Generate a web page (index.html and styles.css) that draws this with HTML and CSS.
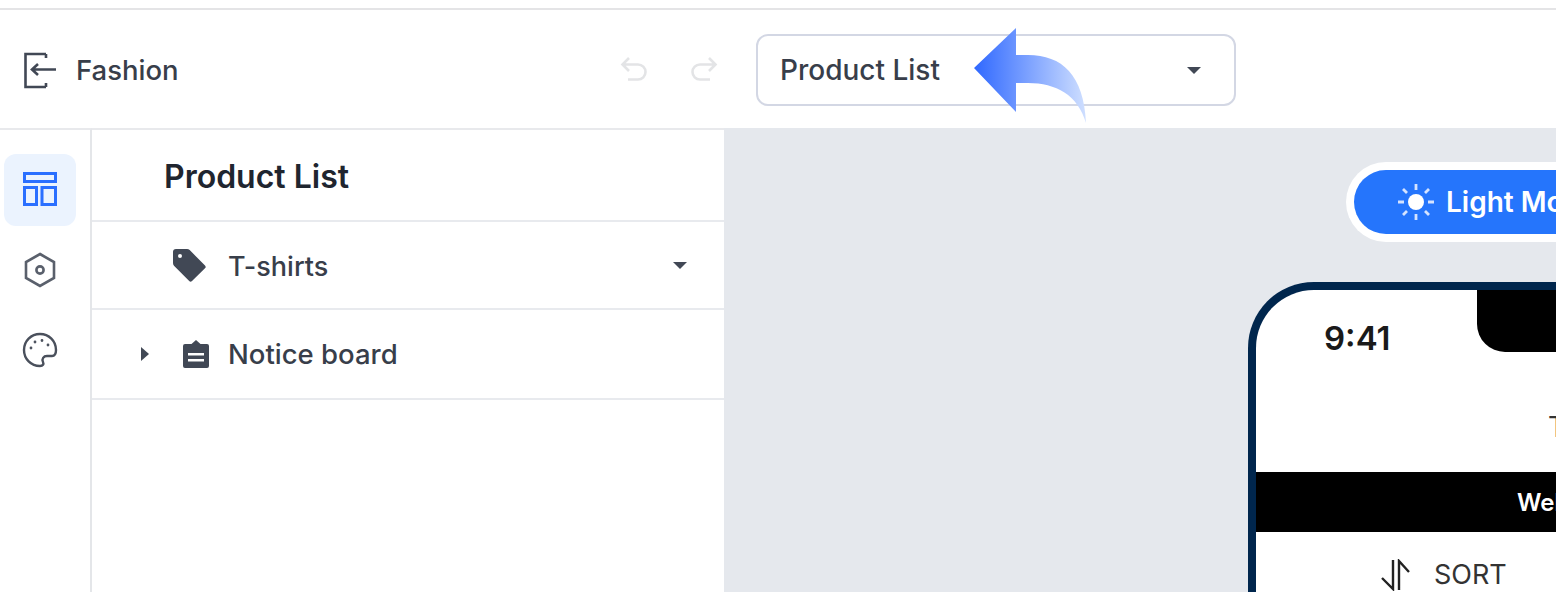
FILE: index.html
```html
<!DOCTYPE html>
<html lang="en">
<head>
<meta charset="utf-8">
<title>Fashion - Product List</title>
<link rel="stylesheet" href="styles.css">
</head>
<body>
<div class="topgap"></div>
<header class="header">
  <div class="brand">
    <svg class="i-exit" viewBox="0 0 34 38" fill="none" stroke="#414855" stroke-width="2.6"><path d="M23 3H2.500v33H23M23 3v4M23 36v-4"/><path d="M33 18.500H9M15 13l-6 5.500 6 5.500" /></svg>
    <span class="brand-name">Fashion</span>
  </div>
  <div class="history">
    <svg class="i-hist" viewBox="0 0 28 28" fill="none" stroke="#e3e4e6" stroke-width="2.6"><path d="M9 2 2.500 8.500 9 15M3 8.500h15a7.500 7.500 0 0 1 0 15H8"/></svg>
    <svg class="i-hist" viewBox="0 0 28 28" fill="none" stroke="#e3e4e6" stroke-width="2.6"><path d="M19 2l6.500 6.500L19 15M25 8.500H10a7.500 7.500 0 0 0 0 15h10"/></svg>
  </div>
  <div class="select">
    <span>Product List</span>
    <span class="caret"></span>
  </div>
  <svg class="arrow" viewBox="0 0 114 100" fill="url(#arrowfill)">
    <defs><linearGradient id="arrowfill" x1="0" x2="1" y1="0" y2="0"><stop offset="0" stop-color="#2f68ff"/><stop offset="1" stop-color="#cfdfff"/></linearGradient></defs>
    <path d="M0 40 42 0v27h12c34 0 56 20 58 68-8-28-30-40-58-40H42v29z"/>
  </svg>
</header>
<div class="main">
  <nav class="rail">
    <div class="rail-item active">
      <svg class="i-layout" viewBox="0 0 34 34" fill="none" stroke="#2a6fff" stroke-width="3"><path d="M1.500 1.500h31v8h-31zM1.500 15.500h12v17h-12zM19 15.500h13.500v17H19z"/></svg>
    </div>
    <div class="rail-item">
      <svg class="i-rail" viewBox="0 0 36 36" fill="none" stroke="#5a606c" stroke-width="2.600"><path d="M18 2 32 10v16l-14 8-14-8V10z"/><circle cx="18" cy="18" r="3.600"/></svg>
    </div>
    <div class="rail-item">
      <svg class="i-rail" viewBox="0 0 36 36" fill="none" stroke="#4a505c" stroke-width="2.400"><path d="M18 2C9 2 2 9 2 18s7 16 16 16c3 0 4-2 3-4-1.500-3 .5-6 4-6h5c3 0 4-3 4-6C34 9 27 2 18 2z"/><circle cx="9" cy="16" r=".8" fill="#414855" stroke-width="1.200"/><circle cx="13" cy="10" r=".8" fill="#414855" stroke-width="1.200"/><circle cx="20" cy="8.500" r=".8" fill="#414855" stroke-width="1.200"/><circle cx="26" cy="13" r=".8" fill="#414855" stroke-width="1.200"/></svg>
    </div>
  </nav>
  <aside class="panel">
    <div class="panel-title">Product List</div>
    <div class="row row-tshirts">
      <svg class="i-tag" viewBox="0 0 34 34" fill="#414855"><path d="M4 1h11c1 0 2 .4 2.700 1.100L33 17.500a2 2 0 0 1 0 2.800L20 33a2 2 0 0 1-2.800 0L2 17.700C1.300 17 1 16 1 15V4a3 3 0 0 1 3-3zm4 5a2 2 0 1 0 0 4 2 2 0 0 0 0-4z" fill-rule="evenodd"/></svg>
      <span class="row-label">T-shirts</span>
      <span class="caret caret-row"></span>
    </div>
    <div class="row row-notice">
      <span class="caret-right"></span>
      <svg class="i-board" viewBox="0 0 28 28" fill="#414855"><path d="M3 4h6.500L14 0l4.500 4H25a2 2 0 0 1 2 2v20a2 2 0 0 1-2 2H3a2 2 0 0 1-2-2V6a2 2 0 0 1 2-2zm3 9v2.500h16V13zm0 6v2.500h16V19z" fill-rule="evenodd"/></svg>
      <span class="row-label notice-label">Notice board</span>
    </div>
  </aside>
  <section class="canvas">
    <div class="mode-wrap">
      <div class="mode">
        <svg class="i-sun" viewBox="0 0 36 36" fill="#fff" stroke="#d5e3ff" stroke-width="2.800"><circle cx="18" cy="18" r="8" stroke="none"/><path d="M18 0v6M18 30v6M0 18h6M30 18h6M5 5l4 4M27 27l4 4M5 31l4-4M27 9l4-4"/></svg>
        <span>Light Mode</span>
      </div>
    </div>
    <div class="phone">
      <div class="status">
        <span class="clock">9:41</span>
        <span class="notch"></span>
      </div>
      <div class="phone-title">T-shirts</div>
      <div class="banner">Welcome to our store</div>
      <div class="sort">
        <svg class="i-sort" viewBox="0 0 32 32" fill="none" stroke="#222" stroke-width="2.400"><path d="M13 1v29L2 19M19 31V2l10 11"/></svg>
        <span>SORT</span>
      </div>
    </div>
  </section>
</div>
</body>
</html>
```
FILE: styles.css
```css
* { box-sizing: border-box; }
html, body { margin: 0; height: 100%; overflow: hidden; }
body { background: #fff; font-family: Inter, "Liberation Sans", sans-serif; color: #2a2f3a; }
.topgap { height: 10px; border-bottom: 2px solid #e4e4e6; }
.header { height: 118px; display: flex; align-items: center; position: relative; padding-top: 2px; }
.brand { display: flex; align-items: center; width: 620px; padding-left: 23px; }
.i-exit { width: 34px; height: 38px; }
.brand-name { margin-left: 19px; font-size: 27.500px; font-weight: 500; color: #383e4a; }
.history { display: flex; gap: 42px; width: 136px; }
.i-hist { width: 28px; height: 28px; }
.select { width: 480px; height: 72px; border: 2px solid #d3d7e4; border-radius: 12px; display: flex; align-items: center; justify-content: space-between; padding: 0 33px 0 22px; font-size: 28px; font-weight: 500; color: #383e4a; }
.caret { width: 0; height: 0; border-left: 7px solid transparent; border-right: 7px solid transparent; border-top: 7px solid #414855; }
.arrow { position: absolute; left: 974px; top: 18px; width: 114px; height: 100px; }
.main { display: flex; height: 464px; }
.rail { width: 92px; border-right: 2px solid #e4e6e9; border-top: 2px solid #e8e9ec; padding: 24px 4px 0; display: flex; flex-direction: column; gap: 8px; flex-shrink: 0; }
.rail-item { width: 72px; height: 72px; border-radius: 12px; display: flex; align-items: center; justify-content: center; }
.rail-item.active { background: #ebf3fe; }
.i-rail { width: 36px; height: 36px; }
.i-layout { width: 34px; height: 34px; margin-bottom: 2px; }
.panel { width: 632px; border-top: 2px solid #e8e9ec; flex-shrink: 0; }
.panel-title { height: 92px; padding: 2px 0 0 72px; display: flex; align-items: center; font-size: 32px; font-weight: 600; color: #20252f; border-bottom: 2px solid #e8eaee; }
.row { display: flex; align-items: center; border-bottom: 2px solid #e8eaee; }
.row-tshirts { height: 88px; padding: 0 37px 0 80px; }
.row-notice { height: 90px; padding-left: 49px; }
.row-label { font-size: 27px; font-weight: 500; color: #383e4a; position: relative; }
.row-tshirts .row-label { margin: 2px 0 0 22px; flex: 1; }
.row-notice .row-label { margin-left: 18px; }
.notice-label { font-size: 27.500px; }
.i-tag { width: 34px; height: 34px; }
.i-board { width: 28px; height: 28px; margin-left: 33px; }
.caret-right { width: 0; height: 0; border-top: 7px solid transparent; border-bottom: 7px solid transparent; border-left: 8px solid #414855; }
.canvas { flex: 1; background: #e5e8ed; overflow: hidden; padding: 34px 0 0 524px; }
.mode-wrap { padding-left: 98px; height: 120px; }
.mode { width: 320px; height: 80px; border: 8px solid #fff; border-radius: 40px 0 0 40px; border-right: 0; background: #2575fc; color: #fff; display: flex; align-items: center; padding-left: 44px; font-size: 28px; font-weight: 600; white-space: nowrap; overflow: hidden; }
.i-sun { width: 36px; height: 36px; margin-right: 12px; flex-shrink: 0; }
.phone { width: 500px; height: 400px; background: #fff; border: 8px solid #00264d; border-bottom: 0; border-radius: 66px 66px 0 0; overflow: hidden; }
.status { height: 62px; position: relative; display: flex; justify-content: flex-start; }
.clock { margin: 28px 0 0 68px; font-size: 33px; font-weight: 600; color: #1a1a1a; line-height: 40px; }
.notch { position: absolute; left: 221px; top: 0; width: 260px; height: 62px; background: #000; border-radius: 0 0 28px 28px; }
.phone-title { height: 120px; padding-top: 58px; padding-left: 292px; font-size: 28px; color: #333; white-space: nowrap; }
.banner { height: 60px; background: #000; color: #fff; font-size: 24px; font-weight: 600; display: flex; align-items: center; padding-left: 261px; white-space: nowrap; }
.sort { display: flex; align-items: center; margin-top: 26px; padding-left: 124px; font-size: 27px; color: #333; }
.i-sort { width: 32px; height: 32px; margin-right: 22px; }
```
